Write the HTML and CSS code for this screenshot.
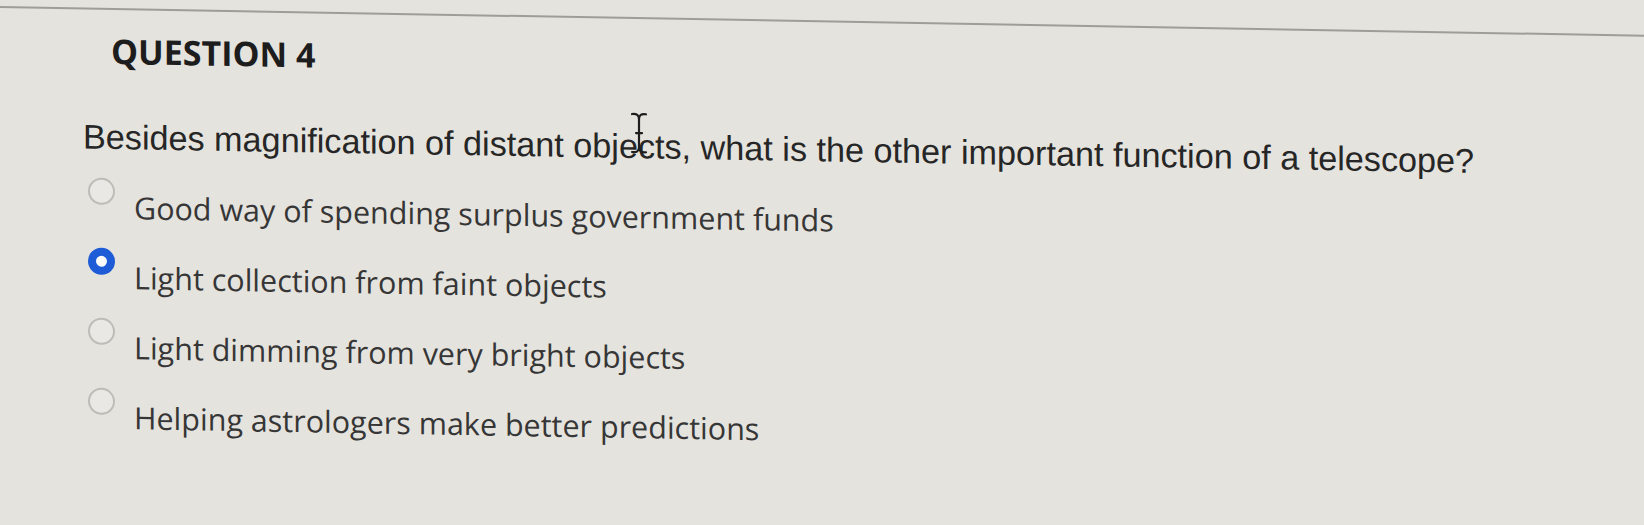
FILE: index.html
```html
<!DOCTYPE html>
<html>
<head>
<meta charset="utf-8">
<link rel="stylesheet" href="styles.css">
</head>
<body>
<div class="page">
  <div class="rule"></div>
  <h2 class="qtitle">QUESTION 4</h2>
  <p class="qtext">Besides magnification of distant objects, what is the other important function of a telescope?</p>
  <ul class="options">
    <li class="opt"><span class="radio"></span><span class="label">Good way of spending surplus government funds</span></li>
    <li class="opt"><span class="radio checked"></span><span class="label">Light collection from faint objects</span></li>
    <li class="opt"><span class="radio"></span><span class="label">Light dimming from very bright objects</span></li>
    <li class="opt"><span class="radio"></span><span class="label">Helping astrologers make better predictions</span></li>
  </ul>
  <svg class="cursor" width="18" height="42" viewBox="0 0 18 42"><path d="M2 2 Q9 1 9 7 Q9 1 16 2 M9 7 V35 M2 40 Q9 41 9 35 Q9 41 16 40 M6 21 H12" fill="none" stroke="#1e1e1e" stroke-width="2.2" stroke-linecap="round"/></svg>
</div>
</body>
</html>
```
FILE: styles.css
```css
html, body {
  margin: 0;
  padding: 0;
  background: #e5e3de;
  overflow: hidden;
}
.page {
  position: relative;
  width: 1644px;
  height: 480px;
  transform: skewY(1deg);
  transform-origin: 0 0;
  padding-top: 6px;
  box-sizing: border-box;
}
.rule {
  height: 2px;
  background: #9e9d98;
}
.qtitle {
  margin: 21px 0 0 111px;
  font-family: "Open Sans", sans-serif;
  font-weight: 700;
  font-size: 34px;
  line-height: 40px;
  color: #1d1d1d;
}
.qtext {
  margin: 46px 0 0 83px;
  font-family: "Liberation Sans", Arial, sans-serif;
  font-size: 34.2px;
  line-height: 40px;
  color: #262626;
}
.options {
  list-style: none;
  margin: 21px 0 0 0;
  padding: 0 0 0 88px;
}
.opt {
  display: flex;
  align-items: flex-start;
  height: 70px;
}
.radio {
  width: 27px;
  height: 27px;
  box-sizing: border-box;
  border: 2px solid #bdbcb7;
  border-radius: 50%;
  background: #e9e8e4;
  flex: none;
}
.radio.checked {
  border: 8px solid #1d5cd6;
  background: #fbfbfb;
}
.label {
  margin: 9px 0 0 19px;
  font-family: "Open Sans", sans-serif;
  font-size: 30.5px;
  line-height: 40px;
  color: #363636;
}
.cursor {
  position: absolute;
  left: 630px;
  top: 101px;
}
```
